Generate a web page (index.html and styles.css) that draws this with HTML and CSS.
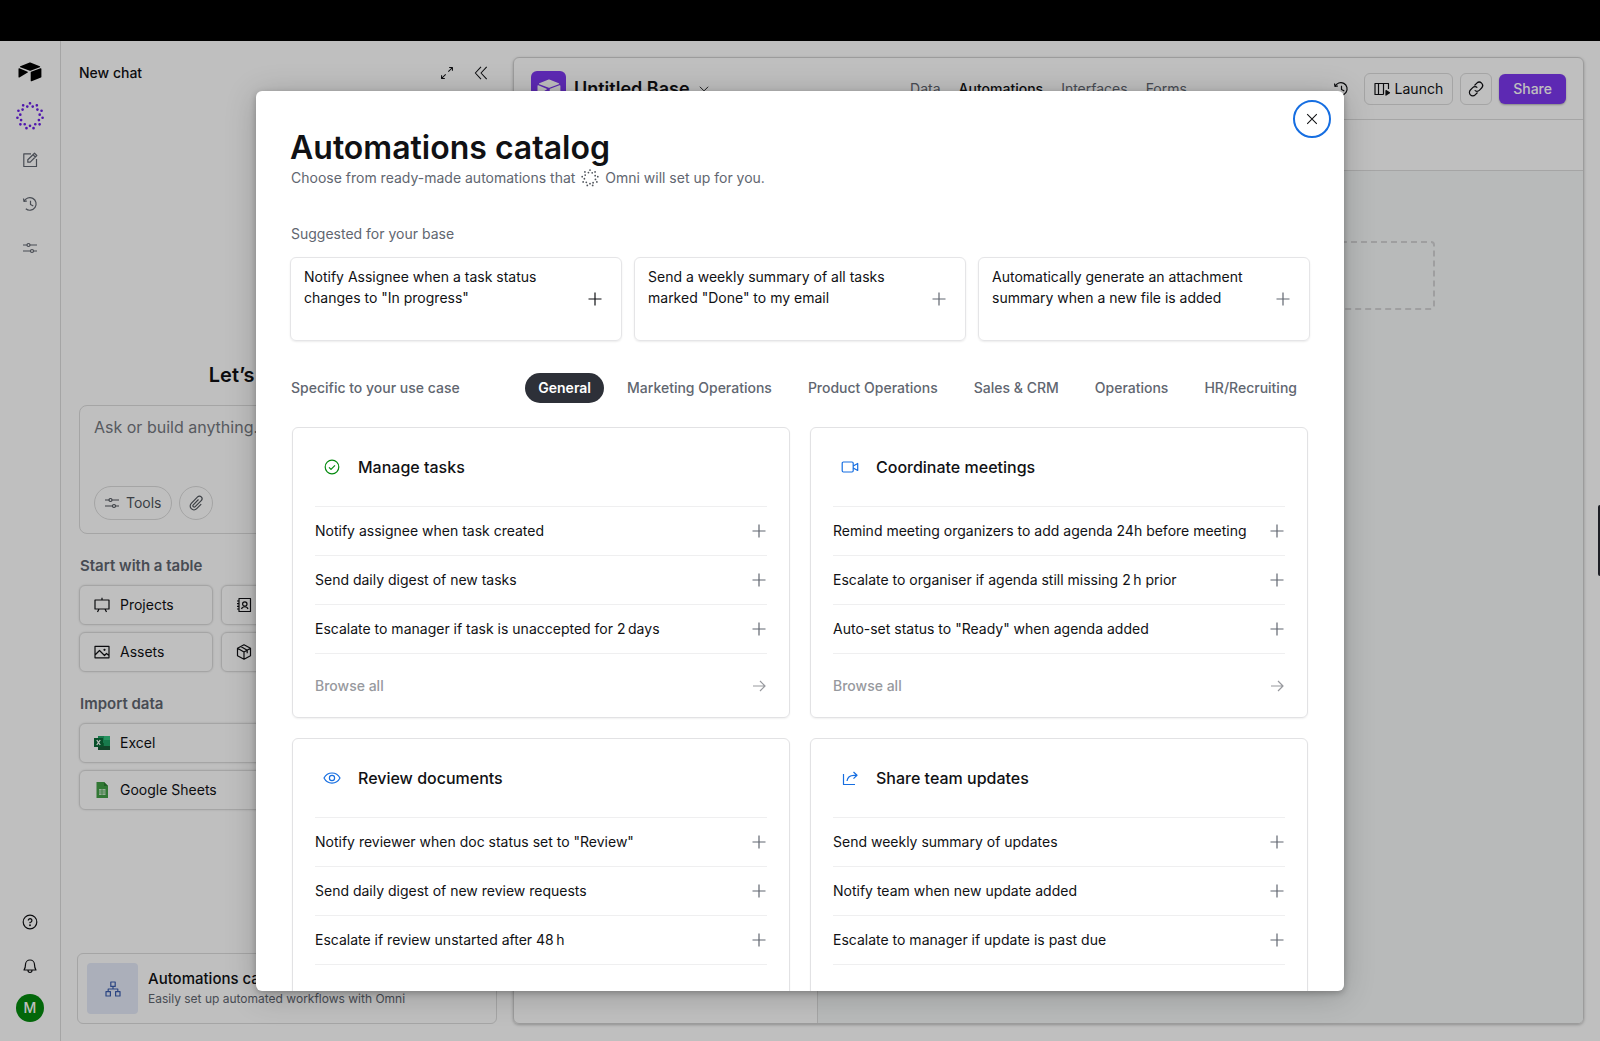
FILE: index.html
```html
<!DOCTYPE html>
<html lang="en">
<head>
    <meta charset="UTF-8">
    <meta name="viewport" content="width=device-width, initial-scale=1.0">
    <title>Untitled Base - Automations</title>
    <link rel="stylesheet" href="styles.css">
</head>
<body>
    <svg class="sprite" aria-hidden="true">
        <symbol id="plus" viewBox="0 0 16 16"><path d="M8 1.500v13M1.500 8h13"/></symbol>
        <symbol id="arrow" viewBox="0 0 16 16"><path d="M2 8h12M9 3l5 5-5 5"/></symbol>
        <symbol id="history" viewBox="0 0 16 16"><path d="M2 5.500A6.300 6.300 0 1 1 3.800 12.800M1.500 2.500L2 5.500l3-.5M8.500 4.800V8.500l2.800 1.600"/></symbol>
        <symbol id="sliders" viewBox="0 0 16 16"><path d="M1 5h4M8 5h7M1 11h7.500M11.500 11H15"/><circle cx="6.500" cy="5" r="1.500"/><circle cx="10" cy="11" r="1.500"/></symbol>
        <symbol id="omni" viewBox="0 0 28 28">
            <circle cx="14" cy="14" r="12.700" pathLength="11" stroke-dasharray="0 1" transform="rotate(-90 14 14)"/>
            <circle cx="14" cy="14" r="9.800" pathLength="11" stroke-dasharray="0 1" transform="rotate(90 14 14)"/>
        </symbol>
        <symbol id="omni-sm" viewBox="0 0 28 28">
            <circle cx="14" cy="14" r="12.300" pathLength="9" stroke-dasharray="0 1" transform="rotate(-90 14 14)"/>
            <circle cx="14" cy="14" r="8.800" pathLength="9" stroke-dasharray="0 1" transform="rotate(90 14 14)"/>
        </symbol>
    </svg>

    <div class="top-strip"></div>

    <div class="app">
        <!-- Left rail -->
        <nav class="rail">
            <button class="rail-btn logo" aria-label="Home">
                <svg width="24" height="20" viewBox="0 0 24 20"><path d="M11 .7 2.300 4.200c-.5.200-.5.800 0 1l8.800 3.300c.7.300 1.400.3 2 0l8.700-3.300c.5-.2.500-.8 0-1L13 .7c-.7-.3-1.300-.3-2 0zM.5 6.800v8.100c0 .5.500.8.900.6l8.300-4.900c.4-.2.400-.7 0-.9L1.300 6.300c-.4-.2-.8 0-.8.5zM12.700 10.400v8.300c0 .5.400.8.900.6l9.400-3.700c.3-.1.400-.3.400-.6V6.800c0-.5-.4-.8-.9-.6l-9.400 3.600c-.3.100-.4.300-.4.600z"/></svg>
            </button>
            <button class="rail-btn omni" aria-label="Omni"><svg width="28" height="28"><use href="#omni"/></svg></button>
            <button class="rail-btn muted" aria-label="New chat">
                <svg class="icon" viewBox="0 0 16 16"><path d="M9 1.800H1.800v12.700h12.700V7M5.800 10.200V7.800L12.500 1.200l2.300 2.300L8.200 10.200zM11 2.700 13.300 5"/></svg>
            </button>
            <button class="rail-btn muted" aria-label="History"><svg class="icon"><use href="#history"/></svg></button>
            <button class="rail-btn muted" aria-label="Settings"><svg class="icon"><use href="#sliders"/></svg></button>
            <div class="spacer"></div>
            <button class="rail-btn" aria-label="Help">
                <svg class="icon" viewBox="0 0 16 16"><circle cx="8" cy="8" r="6.800"/><path d="M6.300 6.500A1.800 1.800 0 1 1 8 8.300v1"/><circle cx="8" cy="11.300" r=".4"/></svg>
            </button>
            <button class="rail-btn" aria-label="Notifications">
                <svg class="icon" viewBox="0 0 16 16"><path d="M3.500 6.500a4.500 4.500 0 0 1 9 0c0 3 .8 4.500 1.500 5.500H2c.7-1 1.500-2.500 1.500-5.500zM6 12.300c0 2.900 4 2.900 4 0"/></svg>
            </button>
            <button class="avatar">M</button>
        </nav>

        <!-- Chat panel -->
        <aside class="chat">
            <header class="chat-head">
                <span>New chat</span>
                <div class="chat-actions">
                    <svg class="icon" viewBox="0 0 16 16"><path d="M9.500 6.500 14 2M10.500 1.800h3.700v3.700M6.500 9.500 2 14M1.800 10.500v3.700h3.700"/></svg>
                    <svg class="icon" viewBox="0 0 16 16"><path d="M8 1 1.500 8 8 15M14.500 1 8 8l6.500 7"/></svg>
                </div>
            </header>
            <h2 class="greeting">Let’s get started</h2>
            <div class="prompt">
                <textarea class="prompt-text" aria-label="Message" placeholder="Ask or build anything..."></textarea>
                <div class="prompt-tools">
                    <button class="pill"><svg class="icon"><use href="#sliders"/></svg>Tools</button>
                    <button class="pill round" aria-label="Attach">
                        <svg class="icon" viewBox="0 0 16 16"><path d="M10.500 4.500 5.300 9.800a1.300 1.300 0 0 0 1.900 1.900l6-6.100a2.500 2.500 0 0 0-3.600-3.700L3.300 8.300a3.800 3.800 0 0 0 5.400 5.400l4.500-4.600"/></svg>
                    </button>
                </div>
            </div>
            <h3 class="section-title">Start with a table</h3>
            <div class="table-grid">
                <button class="tile"><svg class="icon" viewBox="0 0 16 16"><path d="M1 3h14v9H1zM8 3V.8M5 12l-1.500 3M11 12l1.500 3"/></svg>Projects</button>
                <button class="tile"><svg class="icon" viewBox="0 0 16 16"><path d="M3 1.500h11.500v13H3zM1 4h2M1 6.700h2M1 9.300h2M1 12h2M5.500 12c.7-3 5.800-3 6.500 0"/><circle cx="8.800" cy="7" r="2.200"/></svg></button>
                <button class="tile"></button>
                <button class="tile"><svg class="icon" viewBox="0 0 16 16"><path d="M1 2.300h14v11.500H1zM1 11l4.500-4.500 5 5 2-2 2.500 2"/><circle cx="10.500" cy="5.800" r=".5"/></svg>Assets</button>
                <button class="tile"><svg class="icon" viewBox="0 0 16 16"><path d="M8 .8 14.500 4.300v7.400L8 15.200 1.500 11.700V4.300zM1.500 4.300 8 8l6.500-3.700M8 8v7.200M4.800 2.600l6.400 3.600v3"/></svg></button>
                <button class="tile"></button>
            </div>
            <h3 class="section-title">Import data</h3>
            <div class="import-list">
                <button class="tile">
                    <svg width="16" height="16" viewBox="0 0 16 16"><path fill="#21a366" d="M4 1h12v14H4z"/><path fill="#107c41" d="M4 8h6v7H4z"/><path fill="#185c37" d="M4 11h12v4H4z"/><path fill="#33c481" d="M10 1h6v4h-6z"/><path fill="#0b6b38" d="M0 3h9v9H0z"/><path d="m2.800 5 3.400 5m0-5-3.400 5" fill="none" stroke="#fff" stroke-width="1.300"/></svg>
                    Excel
                </button>
                <button class="tile">
                    <svg width="16" height="16" viewBox="0 0 16 16"><path fill="#43a047" d="M2.500 0H10l4 4v12H2.500z"/><path fill="#2e7d32" d="M10 0v4h4z"/><path fill="#c8e6c9" d="M5 7h6.500v6H5z"/><path d="M5 9h6.500M5 11h6.500M8 7v6" stroke="#43a047" stroke-width=".7"/></svg>
                    Google Sheets
                </button>
            </div>
            <div class="spacer"></div>
            <a class="promo" href="#catalog">
                <span class="promo-icon">
                    <svg class="icon" viewBox="0 0 16 16"><path d="M5.800 1h4.400v4.400H5.800zM1 10.600h4.400V15H1zM10.600 10.600H15V15h-4.400zM8 5.400V8M3.200 10.600V8h9.600v2.600"/></svg>
                </span>
                <span class="promo-body">
                    <span class="promo-title">Automations catalog</span>
                    <span class="promo-sub">Easily set up automated workflows with Omni</span>
                </span>
            </a>
        </aside>

        <!-- Base -->
        <main class="base">
            <header class="base-head">
                <div class="base-name">
                    <span class="base-logo">
                        <svg width="24" height="20" viewBox="0 0 24 20"><path d="M11 .7 2.300 4.200c-.5.200-.5.800 0 1l8.800 3.300c.7.300 1.400.3 2 0l8.700-3.300c.5-.2.500-.8 0-1L13 .7c-.7-.3-1.300-.3-2 0zM.5 6.800v8.100c0 .5.500.8.900.6l8.300-4.900c.4-.2.400-.7 0-.9L1.300 6.300c-.4-.2-.8 0-.8.5zM12.700 10.400v8.300c0 .5.400.8.900.6l9.400-3.700c.3-.1.400-.3.400-.6V6.800c0-.5-.4-.8-.9-.6l-9.400 3.600c-.3.100-.4.300-.4.600z"/></svg>
                    </span>
                    <h1>Untitled Base</h1>
                    <svg class="icon chevron" viewBox="0 0 16 16"><path d="m2.500 5 5.500 5.500L13.500 5"/></svg>
                </div>
                <nav class="base-nav">
                    <a href="#data">Data</a>
                    <a href="#automations" class="active">Automations</a>
                    <a href="#interfaces">Interfaces</a>
                    <a href="#forms">Forms</a>
                </nav>
                <div class="base-actions">
                    <svg class="icon history" viewBox="0 0 16 16"><use href="#history"/></svg>
                    <button class="btn"><svg class="icon" viewBox="0 0 16 16"><path d="M9.500 13.500H1v-11h13.500V8M4.500 2.500v11M9.500 2.500v11"/><path d="m12 9.500 3.500 2.300-3.500 2.300z" fill="currentColor"/></svg>Launch</button>
                    <button class="btn square" aria-label="Copy link"><svg class="icon" viewBox="0 0 16 16"><path d="m6.500 4.500 2.300-2.300a3.200 3.200 0 0 1 4.800 4.800l-2.300 2.300a3.200 3.200 0 0 1-4.600 0M9.500 11.500l-2.300 2.300A3.200 3.200 0 0 1 2.400 9l2.300-2.300a3.200 3.200 0 0 1 4.600 0"/></svg></button>
                    <button class="btn primary">Share</button>
                </div>
            </header>
            <div class="toolbar"></div>
            <div class="workspace">
                <div class="side-list"></div>
                <div class="canvas"><div class="dropzone"></div></div>
            </div>
        </main>

        <!-- Automations catalog dialog -->
        <div class="backdrop">
            <section class="modal" id="catalog" role="dialog" aria-labelledby="catalog-title">
                <button class="close" aria-label="Close"><svg class="icon" viewBox="0 0 16 16"><path d="m2.500 2.500 11 11M13.500 2.500l-11 11"/></svg></button>
                <h2 class="modal-title" id="catalog-title">Automations catalog</h2>
                <p class="modal-sub">Choose from ready-made automations that <svg class="omni-small" width="18" height="18" viewBox="0 0 28 28"><use href="#omni-sm"/></svg> Omni will set up for you.</p>

                <h3 class="label">Suggested for your base</h3>
                <div class="suggested">
                    <button class="suggestion"><span>Notify Assignee when a task status changes to "In progress"</span><svg class="icon dark"><use href="#plus"/></svg></button>
                    <button class="suggestion"><span>Send a weekly summary of all tasks marked "Done" to my email</span><svg class="icon"><use href="#plus"/></svg></button>
                    <button class="suggestion"><span>Automatically generate an attachment summary when a new file is added</span><svg class="icon"><use href="#plus"/></svg></button>
                </div>

                <div class="usecase">
                    <h3 class="usecase-label">Specific to your use case</h3>
                    <div class="tabs">
                        <button class="tab active">General</button>
                        <button class="tab">Marketing Operations</button>
                        <button class="tab">Product Operations</button>
                        <button class="tab">Sales &amp; CRM</button>
                        <button class="tab">Operations</button>
                        <button class="tab">HR/Recruiting</button>
                    </div>
                </div>

                <div class="categories">
                    <article class="category">
                        <h4><svg class="icon green" viewBox="0 0 16 16"><circle cx="8" cy="8" r="6.800"/><path d="m5 8.300 2 2 4-4"/></svg>Manage tasks</h4>
                        <button class="row">Notify assignee when task created<svg class="icon"><use href="#plus"/></svg></button>
                        <button class="row">Send daily digest of new tasks<svg class="icon"><use href="#plus"/></svg></button>
                        <button class="row">Escalate to manager if task is unaccepted for 2&#8239;days<svg class="icon"><use href="#plus"/></svg></button>
                        <a class="browse" href="#manage">Browse all<svg class="icon"><use href="#arrow"/></svg></a>
                    </article>
                    <article class="category">
                        <h4><svg class="icon blue" viewBox="0 0 16 16"><rect x=".2" y="3" width="11" height="10" rx="1.200"/><path d="m11.200 7 4.500-2.500v7L11.200 9"/></svg>Coordinate meetings</h4>
                        <button class="row">Remind meeting organizers to add agenda 24h before meeting<svg class="icon"><use href="#plus"/></svg></button>
                        <button class="row">Escalate to organiser if agenda still missing 2&#8239;h prior<svg class="icon"><use href="#plus"/></svg></button>
                        <button class="row">Auto-set status to "Ready" when agenda added<svg class="icon"><use href="#plus"/></svg></button>
                        <a class="browse" href="#meetings">Browse all<svg class="icon"><use href="#arrow"/></svg></a>
                    </article>
                    <article class="category">
                        <h4><svg class="icon blue" viewBox="0 0 16 16"><path d="M0 8c3.500-6.700 12.500-6.700 16 0-3.500 6.700-12.500 6.700-16 0z"/><circle cx="8" cy="8" r="2.600"/></svg>Review documents</h4>
                        <button class="row">Notify reviewer when doc status set to "Review"<svg class="icon"><use href="#plus"/></svg></button>
                        <button class="row">Send daily digest of new review requests<svg class="icon"><use href="#plus"/></svg></button>
                        <button class="row">Escalate if review unstarted after 48&#8239;h<svg class="icon"><use href="#plus"/></svg></button>
                        <a class="browse" href="#review">Browse all<svg class="icon"><use href="#arrow"/></svg></a>
                    </article>
                    <article class="category">
                        <h4><svg class="icon blue" viewBox="0 0 16 16"><path d="M1.500 4v10.500H13M11.500 2l3.500 3.300-3.500 3.300M15 5.300h-3C8 5.300 5.500 7.500 5 11"/></svg>Share team updates</h4>
                        <button class="row">Send weekly summary of updates<svg class="icon"><use href="#plus"/></svg></button>
                        <button class="row">Notify team when new update added<svg class="icon"><use href="#plus"/></svg></button>
                        <button class="row">Escalate to manager if update is past due<svg class="icon"><use href="#plus"/></svg></button>
                        <a class="browse" href="#share">Browse all<svg class="icon"><use href="#arrow"/></svg></a>
                    </article>
                </div>
            </section>
        </div>
        <div class="edge-handle"></div>
    </div>
</body>
</html>
```
FILE: styles.css
```css
* {
    margin: 0;
    padding: 0;
    box-sizing: border-box;
}

body {
    font-family: Inter, 'Liberation Sans', sans-serif;
    font-size: 14px;
    line-height: 20px;
    color: #101114;
    height: 100vh;
    display: flex;
    flex-direction: column;
    overflow: hidden;
    background: #fff;
}

button,
textarea {
    font: inherit;
    color: inherit;
    background: none;
    border: none;
    cursor: pointer;
}

a {
    color: inherit;
    text-decoration: none;
}

.sprite {
    display: none;
}

.icon {
    width: 16px;
    height: 16px;
    flex-shrink: 0;
    overflow: visible;
    fill: none;
    stroke: currentColor;
    stroke-width: 1.2;
    stroke-linejoin: round;
}

.spacer {
    flex: 1;
}

.top-strip {
    height: 41px;
    flex-shrink: 0;
    background: #000;
}

.app {
    position: relative;
    flex: 1;
    min-height: 0;
    display: flex;
}

/* Left rail */
.rail {
    width: 61px;
    border-right: 1px solid #dcdcdc;
    padding: 15px 0 19px;
    display: flex;
    flex-direction: column;
    align-items: center;
    gap: 12px;
}

.rail-btn {
    width: 32px;
    height: 32px;
    display: flex;
    align-items: center;
    justify-content: center;
}

.rail-btn.muted {
    color: #616670;
}

.rail-btn.omni {
    stroke: #6b1fe8;
    stroke-width: 2.7;
    stroke-linecap: round;
    fill: none;
}

.avatar {
    width: 28px;
    height: 28px;
    border-radius: 50%;
    background: #048a0e;
    color: #fff;
    font-weight: 500;
}

/* Chat panel */
.chat {
    width: 452px;
    padding: 16px 16px 17px;
    display: flex;
    flex-direction: column;
}

.chat-head {
    height: 32px;
    padding: 0 9px 0 2px;
    display: flex;
    align-items: center;
    justify-content: space-between;
    font-weight: 500;
}

.chat-actions {
    display: flex;
    gap: 20px;
}

.chat-actions .icon {
    width: 14px;
    height: 14px;
}

.greeting {
    margin: 272px 0 16px;
    font-size: 20px;
    line-height: 28px;
    font-weight: 600;
    text-align: center;
}

.prompt {
    height: 129px;
    margin-left: 2px;
    padding: 11px 14px 13px;
    border: 1px solid #dcdcdc;
    border-radius: 8px;
    display: flex;
    flex-direction: column;
}

.prompt-text {
    flex: 1;
    resize: none;
    outline: none;
    font-size: 16px;
}

.prompt-text::placeholder {
    color: #75797f;
}

.prompt-tools {
    display: flex;
    gap: 7px;
}

.pill {
    height: 34px;
    padding: 0 9px;
    display: flex;
    align-items: center;
    gap: 6px;
    border: 1px solid #dcdcdc;
    border-radius: 17px;
    color: #50555c;
}

.pill.round {
    width: 34px;
    padding: 0;
    justify-content: center;
}

.section-title {
    margin: 22px 3px 9px;
    font-size: 15px;
    line-height: 20px;
    font-weight: 600;
    color: #616670;
}

.table-grid {
    margin-left: 2px;
    display: grid;
    grid-template-columns: repeat(3, 1fr);
    gap: 7px 8px;
}

.import-list {
    margin-left: 2px;
    display: grid;
    gap: 7px;
}

.tile {
    height: 40px;
    padding: 0 14px;
    display: flex;
    align-items: center;
    gap: 10px;
    border: 1px solid #dcdcdc;
    border-radius: 6px;
    box-shadow: 0 0 2px rgba(0, 0, 0, 0.15);
}

.promo {
    height: 71px;
    padding: 9px;
    display: flex;
    align-items: center;
    gap: 10px;
    border: 1px solid #dcdcdc;
    border-radius: 6px;
}

.promo-icon {
    width: 51px;
    height: 51px;
    display: flex;
    align-items: center;
    justify-content: center;
    border-radius: 4px;
    background: #e4eaf9;
    color: #3a5cae;
}

.promo-body {
    display: flex;
    flex-direction: column;
}

.promo-title {
    font-size: 15px;
    font-weight: 500;
}

.promo-sub {
    font-size: 12px;
    color: #616670;
}

/* Base */
.base {
    flex: 1;
    margin: 16px 16px 17px 0;
    border: 1px solid #d0d0d0;
    border-radius: 6px;
    box-shadow: 0 1px 3px rgba(0, 0, 0, 0.25);
    display: flex;
    flex-direction: column;
    overflow: hidden;
}

.base-head {
    height: 62px;
    padding: 0 17px;
    display: grid;
    grid-template-columns: 1fr auto 1fr;
    align-items: center;
    border-bottom: 1px solid #dcdcdc;
}

.base-name {
    display: flex;
    align-items: center;
    gap: 8px;
}

.base-name h1 {
    font-size: 18px;
    line-height: 24px;
    font-weight: 600;
}

.base-logo {
    width: 35px;
    height: 35px;
    display: flex;
    align-items: center;
    justify-content: center;
    border-radius: 6px;
    background: #7c37ef;
    fill: #fff;
}

.chevron {
    width: 12px;
}

.base-nav {
    display: flex;
    gap: 18px;
    color: #616670;
}

.base-nav .active {
    color: #101114;
    font-weight: 500;
}

.base-actions {
    display: flex;
    align-items: center;
    justify-content: flex-end;
    gap: 7px;
}

.history {
    margin-right: 8px;
}

.btn {
    height: 32px;
    padding: 0 9px;
    display: flex;
    align-items: center;
    justify-content: center;
    gap: 5px;
    border: 1px solid #dcdcdc;
    border-radius: 6px;
}

.btn.square {
    width: 32px;
    padding: 0;
}

.btn.primary {
    height: 30px;
    padding: 0 14px;
    border: none;
    background: #7c37ef;
    color: #fff;
    font-weight: 500;
    box-shadow: 0 1px 2px rgba(0, 0, 0, 0.3);
}

.toolbar {
    height: 51px;
    border-bottom: 1px solid #dcdcdc;
}

.workspace {
    flex: 1;
    display: flex;
}

.side-list {
    width: 304px;
    border-right: 1px solid #dcdcdc;
}

.canvas {
    flex: 1;
    padding-top: 70px;
    background: #f6f8f9;
}

.dropzone {
    width: 468px;
    height: 69px;
    margin: 0 auto;
    border: 2px dashed #d4d5d6;
    border-radius: 4px;
}

/* Dialog */
.backdrop {
    position: absolute;
    inset: 0;
    padding: 50px 24px;
    display: flex;
    justify-content: center;
    background: rgba(0, 0, 0, 0.25);
}

.modal {
    position: relative;
    width: 100%;
    max-width: 1088px;
    padding: 37px 34px;
    border-radius: 6px;
    background: #fff;
    box-shadow: 0 4px 32px rgba(0, 0, 0, 0.2), 0 2px 6px rgba(0, 0, 0, 0.25);
    overflow: hidden;
}

.close {
    position: absolute;
    top: 9px;
    right: 13px;
    width: 38px;
    height: 38px;
    display: flex;
    align-items: center;
    justify-content: center;
    border: 2px solid #166ee1;
    border-radius: 50%;
}

.close .icon {
    width: 14px;
    height: 14px;
}

.modal-title {
    font-size: 32px;
    line-height: 39px;
    font-weight: 600;
}

.modal-sub,
.label {
    padding-left: 1px;
    color: #616670;
    font-size: 14px;
    line-height: 22px;
    font-weight: 400;
}

.label {
    margin: 34px 0 12px;
}

.omni-small {
    margin: 0 2px;
    vertical-align: -4px;
    stroke: #50555c;
    stroke-width: 2.8;
    stroke-linecap: round;
    fill: none;
}

.suggested {
    display: grid;
    grid-template-columns: repeat(3, 1fr);
    gap: 12px;
}

.suggestion {
    height: 84px;
    padding: 8px 18px 8px 13px;
    display: flex;
    align-items: center;
    justify-content: space-between;
    gap: 32px;
    border: 1px solid #e5e5e7;
    border-radius: 6px;
    box-shadow: 0 1px 2px rgba(0, 0, 0, 0.08);
    line-height: 21px;
    text-align: left;
}

.suggestion span {
    align-self: flex-start;
}

.suggestion .icon,
.row .icon {
    color: #616670;
}

.suggestion .icon.dark {
    color: #101114;
}

.usecase {
    margin: 32px 0 24px;
    padding-left: 1px;
    display: flex;
    align-items: center;
    justify-content: space-between;
    color: #616670;
}

.usecase-label {
    font-size: 14px;
    font-weight: 500;
}

.tabs {
    display: flex;
    gap: 10px;
}

.tab {
    height: 30px;
    padding: 0 13px;
    border-radius: 15px;
    font-weight: 500;
}

.tab.active {
    background: #2d3038;
    color: #fff;
    font-weight: 600;
}

.categories {
    padding: 0 2px;
    display: grid;
    grid-template-columns: 1fr 1fr;
    gap: 20px;
}

.category {
    padding: 0 22px;
    border: 1px solid #e2e2e4;
    border-radius: 6px;
    box-shadow: 0 1px 2px rgba(0, 0, 0, 0.06);
}

.category h4 {
    height: 78px;
    padding-left: 9px;
    display: flex;
    align-items: center;
    gap: 18px;
    font-size: 16px;
    font-weight: 500;
}

.green {
    color: #048a0e;
}

.blue {
    color: #166ee1;
}

.row,
.browse {
    width: 100%;
    display: flex;
    align-items: center;
    justify-content: space-between;
    border-top: 1px solid #efeff0;
    text-align: left;
}

.row {
    height: 49px;
}

.browse {
    height: 64px;
    color: #97999e;
    font-weight: 500;
}

/* Collapsed panel peeking in from the right edge */
.edge-handle {
    position: absolute;
    top: 464px;
    right: 0;
    width: 2px;
    height: 71px;
    border-radius: 2px 0 0 2px;
    background: #1d1f25;
}
```
